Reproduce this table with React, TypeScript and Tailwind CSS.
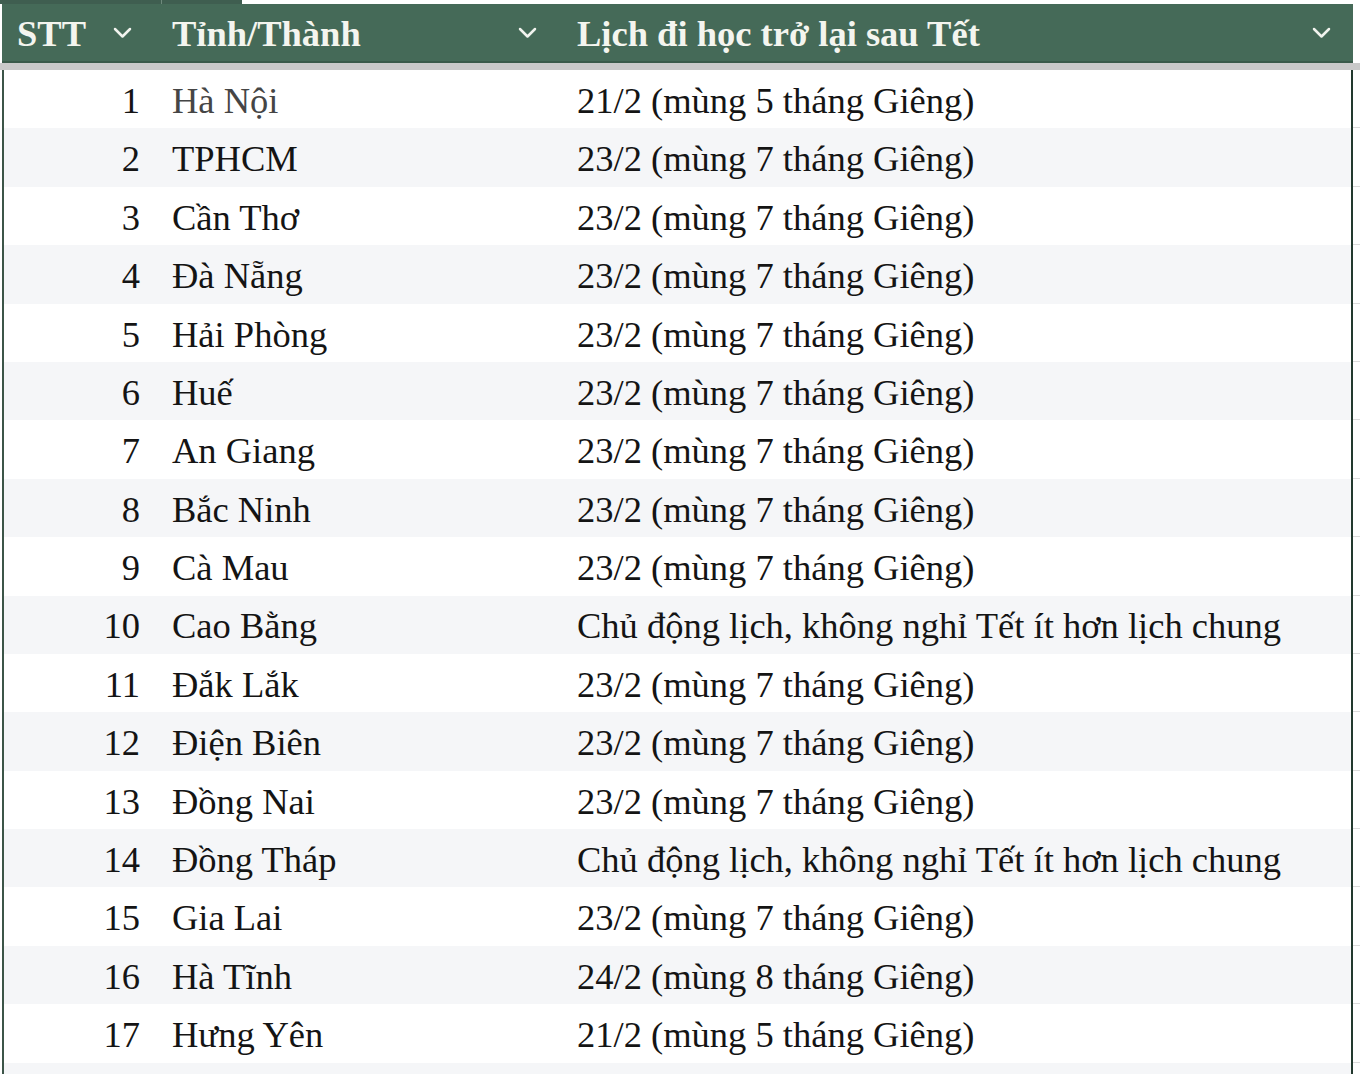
import React from "react";

const rows: [string, string, string][] = [
  ["1", "Hà Nội", "21/2 (mùng 5 tháng Giêng)"],
  ["2", "TPHCM", "23/2 (mùng 7 tháng Giêng)"],
  ["3", "Cần Thơ", "23/2 (mùng 7 tháng Giêng)"],
  ["4", "Đà Nẵng", "23/2 (mùng 7 tháng Giêng)"],
  ["5", "Hải Phòng", "23/2 (mùng 7 tháng Giêng)"],
  ["6", "Huế", "23/2 (mùng 7 tháng Giêng)"],
  ["7", "An Giang", "23/2 (mùng 7 tháng Giêng)"],
  ["8", "Bắc Ninh", "23/2 (mùng 7 tháng Giêng)"],
  ["9", "Cà Mau", "23/2 (mùng 7 tháng Giêng)"],
  ["10", "Cao Bằng", "Chủ động lịch, không nghỉ Tết ít hơn lịch chung"],
  ["11", "Đắk Lắk", "23/2 (mùng 7 tháng Giêng)"],
  ["12", "Điện Biên", "23/2 (mùng 7 tháng Giêng)"],
  ["13", "Đồng Nai", "23/2 (mùng 7 tháng Giêng)"],
  ["14", "Đồng Tháp", "Chủ động lịch, không nghỉ Tết ít hơn lịch chung"],
  ["15", "Gia Lai", "23/2 (mùng 7 tháng Giêng)"],
  ["16", "Hà Tĩnh", "24/2 (mùng 8 tháng Giêng)"],
  ["17", "Hưng Yên", "21/2 (mùng 5 tháng Giêng)"],
  ["", "", ""],
];

function Chevron() {
  return (
    <svg width="19" height="12" viewBox="0 0 19 12" className="shrink-0 -mt-[3px]">
      <polyline
        points="2,2 9.5,9.5 17,2"
        fill="none"
        stroke="#f1f3ee"
        strokeWidth="2.5"
        strokeLinecap="round"
        strokeLinejoin="round"
      />
    </svg>
  );
}

export default function App() {
  return (
    <div
      className="w-[1360px] h-[1074px] overflow-hidden bg-white text-[36.5px] leading-none text-[#141414]"
      style={{ fontFamily: '"Liberation Serif", "Times New Roman", serif' }}
    >
      {/* sheet tabs strip */}
      <div className="flex h-[4px]">
        <div className="w-[161px] bg-[#3f5e50]" />
        <div className="w-[1px] bg-[#6f8a7d]" />
        <div className="w-[80px] bg-[#3f5e50]" />
        <div className="flex-1 bg-white" />
      </div>

      {/* header */}
      <div className="ml-[2px] w-[1351px] h-[59px] bg-[#456a58] border-b-2 border-[#3a5a4a] grid grid-cols-[155px_405px_1fr] font-bold text-[#f4f5ef]">
        <div className="flex items-center justify-between pl-[15px] pr-[25px] pt-[4px]">
          <span>STT</span>
          <Chevron />
        </div>
        <div className="flex items-center justify-between pl-[15px] pr-[25px] pt-[4px]">
          <span>Tỉnh/Thành</span>
          <Chevron />
        </div>
        <div className="flex items-center justify-between pl-[15px] pr-[22px] pt-[4px]">
          <span>Lịch đi học trở lại sau Tết</span>
          <Chevron />
        </div>
      </div>

      {/* frozen pane divider */}
      <div className="h-[7px] bg-[#c9c9c9]" />

      {/* body */}
      <div className="ml-[2px] border-l-2 border-[#3c5548]">
        {rows.map((r, i) => (
          <div key={i} className="grid grid-cols-[153px_405px_789px_2px_1fr] h-[58.4px]">
            <div className={`flex items-center justify-end pr-[17px] pt-[4px] ${i % 2 ? "bg-[#f5f6f8]" : "bg-white"}`}>
              {r[0]}
            </div>
            <div
              className={`flex items-center pl-[15px] pt-[4px] ${i % 2 ? "bg-[#f5f6f8]" : "bg-white"} ${
                i === 0 ? "text-[#454545]" : ""
              }`}
            >
              {r[1]}
            </div>
            <div className={`flex items-center pl-[15px] pt-[4px] whitespace-nowrap ${i % 2 ? "bg-[#f5f6f8]" : "bg-white"}`}>
              {r[2]}
            </div>
            <div className="bg-[#22392e]" />
            <div className="bg-white border-b border-[#dcdcdc]" />
          </div>
        ))}
      </div>
    </div>
  );
}
